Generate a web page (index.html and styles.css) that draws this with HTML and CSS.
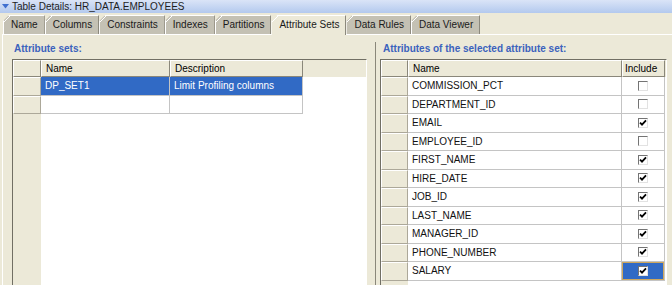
FILE: index.html
```html
<!DOCTYPE html>
<html lang="en">
<head>
  <meta charset="UTF-8" />
  <title>Table Details</title>
  <link rel="stylesheet" href="styles.css">
</head>
<body>
  <div class="title-bar">
    <svg class="arrow" width="7" height="5" viewBox="0 0 7 5"><path d="M0 0H7L3.5 4.5Z" fill="#3f6fcf"/></svg>
    <span>Table Details: HR_DATA.EMPLOYEES</span>
  </div>

  <div class="tabs">
    <div class="tab">Name</div>
    <div class="tab">Columns</div>
    <div class="tab">Constraints</div>
    <div class="tab">Indexes</div>
    <div class="tab">Partitions</div>
    <div class="tab active">Attribute Sets</div>
    <div class="tab">Data Rules</div>
    <div class="tab">Data Viewer</div>
  </div>

  <div class="panel">
    <!-- left: list of sets -->
    <div class="left-pane">
      <div class="heading">Attribute sets:</div>
      <div class="scroll sets-scroll">
        <table class="grid sets">
          <colgroup>
            <col class="c-rh"><col class="c-name"><col class="c-desc">
          </colgroup>
          <thead>
            <tr><th class="corner"></th><th>Name</th><th>Description</th></tr>
          </thead>
          <tbody>
            <tr class="selected"><td class="rh"></td><td>DP_SET1</td><td>Limit Profiling columns</td></tr>
            <tr><td class="rh"></td><td></td><td></td></tr>
          </tbody>
        </table>
      </div>
    </div>

    <!-- right: attributes of the set -->
    <div class="right-pane">
      <div class="heading">Attributes of the selected attribute set:</div>
      <div class="scroll attrs-scroll">
        <table class="grid attrs">
          <colgroup>
            <col class="c-rh2"><col class="c-attr"><col class="c-inc">
          </colgroup>
          <thead>
            <tr><th class="corner"></th><th>Name</th><th>Include</th></tr>
          </thead>
          <tbody id="attr-rows"></tbody>
        </table>
      </div>
    </div>
  </div>

  <script>
    const attrs = [
      ['COMMISSION_PCT', false],
      ['DEPARTMENT_ID', false],
      ['EMAIL', true],
      ['EMPLOYEE_ID', false],
      ['FIRST_NAME', true],
      ['HIRE_DATE', true],
      ['JOB_ID', true],
      ['LAST_NAME', true],
      ['MANAGER_ID', true],
      ['PHONE_NUMBER', true],
      ['SALARY', true]
    ];
    const tick = '<svg width="8" height="8" viewBox="0 0 8 8"><polyline points="1,3.6 3,5.6 7,1.4" fill="none" stroke="#000" stroke-width="1.8"/></svg>';
    const body = document.getElementById('attr-rows');

    attrs.forEach(([name, on], i) => {
      const tr = document.createElement('tr');
      const focus = i === attrs.length - 1 ? ' focus' : '';
      tr.innerHTML = `<td class="rh"></td><td>${name}</td>` +
        `<td class="inc${focus}"><span class="cb">${on ? tick : ''}</span></td>`;
      body.appendChild(tr);
    });
  </script>
</body>
</html>
```

FILE: styles.css
```css
body {
  margin: 0;
  height: 285px;
  overflow: hidden;
  background: #ece9d8;
  font-family: "Liberation Sans", Arial, sans-serif;
  font-size: 10px;
  color: #000;
}

.title-bar {
  display: flex;
  align-items: center;
  gap: 3px;
  height: 13px;
  padding-left: 2px;
  background: linear-gradient(#dae4f7, #b3c9ee);
  color: #1e1e1e;
}
.arrow {
  display: block;
}

.tabs {
  display: flex;
  align-items: flex-end;
  height: 21px;
  padding-left: 3px;
}
.tab {
  box-sizing: border-box;
  height: 19px;
  line-height: 18px;
  padding: 0 6px 0 7px;
  background:
    linear-gradient(to bottom right, transparent 0 42%, #fff 42% 58%, transparent 58%) 0 0 / 6px 6px no-repeat,
    #c4c1b4;
  border-top: 1px solid #fff;
  border-left: 1px solid #fff;
  border-right: 1px solid #8c897d;
  clip-path: polygon(0 100%, 0 6px, 6px 0, 100% 0, 100% 100%);
  color: #1a1a1a;
}
.tab.active {
  position: relative;
  height: 20px;
  margin-bottom: -1px;
  background:
    linear-gradient(to bottom right, transparent 0 42%, #fff 42% 58%, transparent 58%) 0 0 / 6px 6px no-repeat,
    #ece9d8;
}

.panel {
  display: flex;
  margin-left: 2px;
  height: 243px;
  padding-top: 7px;
  border-top: 1px solid #fff;
  border-left: 1px solid #fff;
}

.heading {
  height: 13px;
  line-height: 13px;
  font-weight: bold;
  color: #3b62bd;
}

.left-pane {
  width: 355px;
  padding-left: 9px;
}
.left-pane .heading {
  padding-left: 2px;
}

.right-pane {
  margin-left: 8px;
  padding-left: 4px;
  border-left: 1px solid #8a877a;
}
.right-pane .heading {
  padding-left: 3px;
}

.scroll {
  box-sizing: border-box;
  height: 226px;
  margin-top: 4px;
  overflow: hidden;
  border-top: 1px solid #716f64;
  border-left: 1px solid #716f64;
  border-right: 1px solid #fff;
}
.sets-scroll {
  width: 355px;
  background:
    linear-gradient(to right, #ece9d8 28px, transparent 28px),
    linear-gradient(#ece9d8 17px, #fff 17px);
}
.attrs-scroll {
  width: 287px;
  background:
    linear-gradient(to right, #ece9d8 27px, transparent 27px),
    linear-gradient(#ece9d8 17px, #fff 17px);
}

.grid {
  table-layout: fixed;
  border-collapse: separate;
  border-spacing: 0;
}
.sets { width: 290px; }
.attrs { width: 284px; }
.c-rh { width: 28px; }
.c-name { width: 129px; }
.c-desc { width: 133px; }
.c-rh2 { width: 27px; }
.c-attr { width: 214px; }
.c-inc { width: 43px; }

.grid th {
  box-sizing: border-box;
  height: 17px;
  padding: 0 4px;
  text-align: left;
  font-weight: normal;
  background: #ece9d8;
  border-top: 1px solid #fff;
  border-left: 1px solid #fff;
  border-right: 1px solid #8a877a;
  border-bottom: 1px solid #8a877a;
  white-space: nowrap;
}
.attrs th:last-child {
  padding: 0 2px;
}

.grid td {
  box-sizing: border-box;
  height: 18.5px;
  padding: 0 4px;
  border-right: 1px solid #c4c4c4;
  border-bottom: 1px solid #c4c4c4;
  white-space: nowrap;
  color: #111;
}
.grid td.rh {
  background: #ece9d8;
  border-top: 1px solid #fff;
  border-left: 1px solid #fff;
  border-right: 1px solid #aca899;
  border-bottom: 1px solid #aca899;
}
.grid tr.selected td:not(.rh) {
  background: #316ac5;
  color: #fff;
}

.inc {
  text-align: center;
  font-size: 0;
}
.inc.focus {
  background: #316ac5;
  box-shadow: inset 0 0 0 1px #cfa85e;
}
.cb {
  display: inline-block;
  box-sizing: border-box;
  width: 10px;
  height: 10px;
  vertical-align: middle;
  background: #fff;
  border: 1px solid;
  border-color: #747474 #e2e2e2 #e2e2e2 #747474;
}
.cb svg {
  display: block;
}
```
